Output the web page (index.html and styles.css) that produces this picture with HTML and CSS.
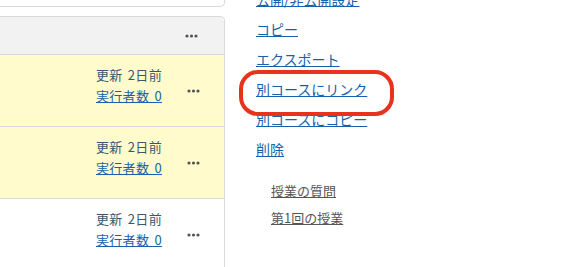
FILE: index.html
```html
<!DOCTYPE html>
<html lang="ja">
  <head>
    <meta charset="UTF-8" />
    <title>教材一覧</title>
    <link rel="stylesheet" href="styles.css">
  </head>
  <body>
    <div class="page">
      <div class="list">
        <div class="card-end"></div>
        <div class="card">
          <div class="card-head">
            <span class="dots"><svg width="13" height="4" viewBox="0 0 13 4"><circle cx="2" cy="2" r="1.6"/><circle cx="6.5" cy="2" r="1.6"/><circle cx="11" cy="2" r="1.6"/></svg></span>
          </div>
          <div class="row picked">
            <div class="meta">
              <div class="updated">更新 2日前</div>
              <a class="runs">実行者数 0</a>
            </div>
            <span class="dots"><svg width="13" height="4" viewBox="0 0 13 4"><circle cx="2" cy="2" r="1.6"/><circle cx="6.5" cy="2" r="1.6"/><circle cx="11" cy="2" r="1.6"/></svg></span>
          </div>
          <div class="row picked">
            <div class="meta">
              <div class="updated">更新 2日前</div>
              <a class="runs">実行者数 0</a>
            </div>
            <span class="dots"><svg width="13" height="4" viewBox="0 0 13 4"><circle cx="2" cy="2" r="1.6"/><circle cx="6.5" cy="2" r="1.6"/><circle cx="11" cy="2" r="1.6"/></svg></span>
          </div>
          <div class="row">
            <div class="meta">
              <div class="updated">更新 2日前</div>
              <a class="runs">実行者数 0</a>
            </div>
            <span class="dots"><svg width="13" height="4" viewBox="0 0 13 4"><circle cx="2" cy="2" r="1.6"/><circle cx="6.5" cy="2" r="1.6"/><circle cx="11" cy="2" r="1.6"/></svg></span>
          </div>
        </div>
      </div>

      <div class="side">
        <ul class="menu">
          <li><a>公開/非公開設定</a></li>
          <li><a>コピー</a></li>
          <li><a>エクスポート</a></li>
          <li class="marked"><a>別コースにリンク</a></li>
          <li><a>別コースにコピー</a></li>
          <li><a>削除</a></li>
        </ul>
        <ul class="sub">
          <li><a>授業の質問</a></li>
          <li><a>第1回の授業</a></li>
        </ul>
      </div>
    </div>
  </body>
</html>
```

FILE: styles.css
```css
* {
  box-sizing: border-box;
}
body {
  margin: 0;
  background: #fff;
  font: 13px "Noto Sans CJK JP", "Noto Sans", sans-serif;
}
.page {
  display: flex;
  height: 267px;
  overflow: hidden;
}
.list {
  width: 225px;
  flex: none;
}
.card-end {
  height: 7px;
  border-right: 1px solid #d9d9d9;
  border-bottom: 1px solid #d9d9d9;
  border-bottom-right-radius: 5px;
}
.card {
  margin-top: 9px;
  border-top: 1px solid #d9d9d9;
  border-right: 1px solid #d9d9d9;
  border-top-right-radius: 5px;
  height: 260px;
}
.card-head {
  height: 38px;
  background: #f2f2f2;
  border-bottom: 1px solid #d9d9d9;
  border-top-right-radius: 5px;
  display: flex;
  align-items: center;
  justify-content: flex-end;
  padding-right: 26px;
}
.dots svg {
  display: block;
  fill: #555;
}
.row {
  height: 72px;
  border-bottom: 1px solid #d9d9d9;
  display: flex;
  align-items: center;
}
.picked {
  background: #fffbcc;
}
.meta {
  margin-left: 96px;
  align-self: flex-start;
  padding-top: 9px;
  line-height: 21px;
  width: 70px;
  white-space: nowrap;
  word-spacing: 2px;
  letter-spacing: 0.3px;
}
.updated {
  color: #37596b;
}
.runs {
  color: #1a5fae;
  text-decoration: underline;
}
.row .dots {
  margin-left: 21px;
}
.side {
  padding-left: 31px;
}
.menu {
  list-style: none;
  margin: -16px 0 0;
  padding: 0;
  font-size: 14px;
  line-height: 30px;
}
.menu a {
  color: #1a5fae;
  text-decoration: underline;
}
.marked {
  position: relative;
}
.marked::after {
  content: "";
  position: absolute;
  left: -17px;
  top: -4px;
  width: 147px;
  height: 38px;
  border: 4px solid #e8321c;
  border-radius: 19px;
}
.sub {
  list-style: none;
  margin: 13px 0 0;
  padding: 0 0 0 15px;
  font-size: 13px;
  line-height: 27px;
}
.sub a {
  color: #555;
  text-decoration: underline;
}
```
